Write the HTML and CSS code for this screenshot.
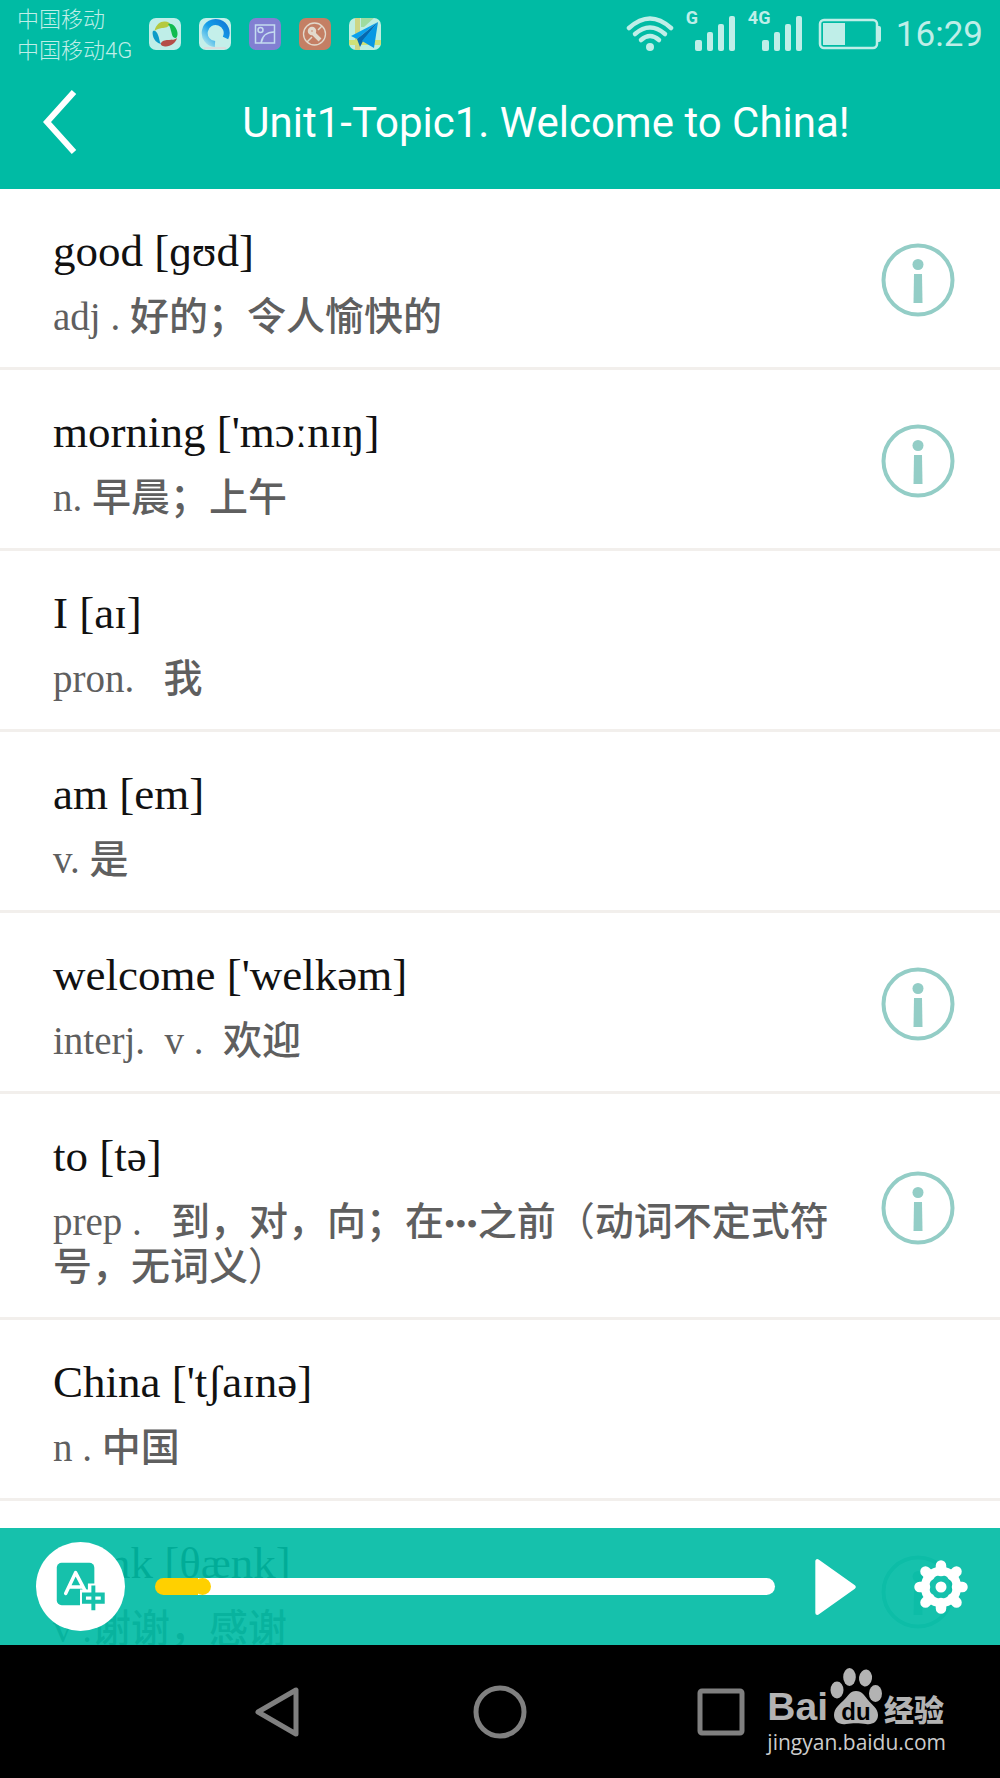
FILE: index.html
```html
<!DOCTYPE html>
<html lang="zh-CN">
<head>
<meta charset="utf-8">
<meta name="viewport" content="width=device-width, initial-scale=1">
<title>Unit1-Topic1. Welcome to China!</title>
<link rel="stylesheet" href="styles.css">
</head>
<body>
<svg class="defs" aria-hidden="true">
  <symbol id="info" viewBox="0 0 74 74">
    <circle cx="37" cy="37" r="34.5" fill="none" stroke="currentColor" stroke-width="4"/>
    <circle cx="37" cy="21.500" r="5.500" fill="currentColor"/>
    <path d="M33 31h8l.5 29h-9z" fill="currentColor"/>
  </symbol>
  <symbol id="signal" viewBox="0 0 42 36">
    <rect x="0" y="24" width="7" height="11" rx="2"/>
    <rect x="12" y="16" width="6" height="19" rx="2"/>
    <rect x="23" y="8" width="6" height="27" rx="2"/>
    <rect x="34" y="0" width="6" height="35" rx="2"/>
  </symbol>
</svg>

<div class="app">
  <header class="top">
    <div class="status">
      <div class="carriers"><span>中国移动</span><span>中国移动4G</span></div>
      <div class="notices">
        <svg viewBox="0 0 32 32"><rect width="32" height="32" rx="7" fill="#bfeee8"/>
          <path d="M5.500 13C7 6 12 3 16 3.500c3 0 5 1.500 5 2.500-1 3-5 4-8 4-3 .5-5 1-7.500 3z" fill="#b5c93f"/>
          <path d="M19 6c5-1.500 9 4 9.500 9 .3 3-1 5.500-2.500 5-3-1-3-4-4-7-.7-3-1-5-3-7z" fill="#10bb50"/>
          <path d="M28 20c-1 5-7 9-12 8.500-3-.3-5-2-4-3.500 2-3 5-3 8-3 3-.3 6 0 8-2z" fill="#b44e48"/>
          <path d="M4 13c2-1 4 1 5 4 1.500 3 1 6 3 9-4-1-7-4-8-8-.4-2-.7-4 0-5z" fill="#0b9cc8"/></svg>
        <svg viewBox="0 0 32 32"><defs><linearGradient id="ring" x1="1" y1="0" x2="0" y2="1"><stop offset="0" stop-color="#1279d8"/><stop offset=".5" stop-color="#149fe8"/><stop offset="1" stop-color="#a9e3ed"/></linearGradient></defs>
          <rect width="32" height="32" rx="7" fill="#c4efea"/>
          <path d="M26.500 20A11 11 0 1 0 16 26" fill="none" stroke="url(#ring)" stroke-width="6"/><path d="M5 30h22" stroke="#d9dede" stroke-width="2"/></svg>
        <svg viewBox="0 0 32 32"><rect width="32" height="32" rx="7" fill="#827fd2"/>
          <g fill="none" stroke="#c4dcf0" stroke-width="1.500"><rect x="6.500" y="7" width="19" height="18"/><circle cx="11.500" cy="12" r="2.500"/><path d="M12 25c1-7 6-11 13-11M12 25l2-5"/></g></svg>
        <svg viewBox="0 0 32 32"><rect width="32" height="32" rx="7" fill="#c47f64"/>
          <g fill="none" stroke="#e2d9cc"><circle cx="15.500" cy="16" r="11" stroke-width="1.300"/><path d="M23 8l-4 4M8 24l5-5" stroke-width="1.500"/><path d="M14 15l7 7" stroke-width="4"/><circle cx="13" cy="13" r="2.500" stroke-width="3.500"/></g></svg>
        <svg viewBox="0 0 32 32"><rect width="32" height="32" rx="7" fill="#bfeee1"/>
          <path d="M6 0h5v32H6z" fill="#cdd685"/><path d="M0 22h32v5H0z" fill="#cfe178"/><path d="M12 0h13l-10 9h-3z" fill="#9fdca0"/>
          <path d="M29 4L2 18l6 3z" fill="#0aa0ee"/><path d="M29 4L8 21l3 8 3-6z" fill="#0669b0"/><path d="M29 4L13 23l12 7z" fill="#0798e4"/></svg>
      </div>
      <div class="system">
        <svg class="wifi" viewBox="0 0 48 36"><g fill="none" stroke="currentColor" stroke-width="4.500" stroke-linecap="round"><path d="M3 12Q24-7 45 12"/><path d="M9 18Q24 5 39 18"/><path d="M15 24Q24 16 33 24"/></g><circle cx="24" cy="31" r="4" fill="currentColor"/></svg>
        <div class="cell"><b>G</b><svg><use href="#signal"/></svg></div>
        <div class="cell wide"><b>4G</b><svg><use href="#signal"/></svg></div>
        <svg class="battery" viewBox="0 0 64 32"><rect x="2" y="2" width="57" height="28" rx="4" fill="none" stroke="currentColor" stroke-width="2.500"/><rect x="5" y="5" width="22" height="22" fill="currentColor"/><path d="M59 8h2q2 0 2 2v12q0 2-2 2h-2z" fill="currentColor"/></svg>
        <time>16:29</time>
      </div>
    </div>
    <div class="bar">
      <button class="back" aria-label="返回"><svg viewBox="0 0 34 64"><path d="M31 2L4 32l27 30" fill="none" stroke="currentColor" stroke-width="6"/></svg></button>
      <h1>Unit1-Topic1. Welcome to China!</h1>
    </div>
  </header>

  <main class="content">
    <ul class="words">
      <li><div class="entry"><h2>good [ɡʊd]</h2><p>adj . 好的；令人愉快的</p></div><button class="info" aria-label="详情"><svg><use href="#info"/></svg></button></li>
      <li><div class="entry"><h2>morning ['mɔːnɪŋ]</h2><p>n. 早晨；上午</p></div><button class="info" aria-label="详情"><svg><use href="#info"/></svg></button></li>
      <li><div class="entry"><h2>I [aɪ]</h2><p>pron.   我</p></div></li>
      <li><div class="entry"><h2>am [em]</h2><p>v. 是</p></div></li>
      <li><div class="entry"><h2>welcome ['welkəm]</h2><p>interj.  v .  欢迎</p></div><button class="info" aria-label="详情"><svg><use href="#info"/></svg></button></li>
      <li><div class="entry"><h2>to [tə]</h2><p>prep .   到，对，向；在<span class="dots">•••</span>之前<span class="paren">（</span>动词不定式符号，无词义<span class="paren">）</span></p></div><button class="info" aria-label="详情"><svg><use href="#info"/></svg></button></li>
      <li><div class="entry"><h2>China ['tʃaɪnə]</h2><p>n . 中国</p></div></li>
      <li><div class="entry"><h2>thank [θænk]</h2><p>v .谢谢，感谢</p></div><button class="info" aria-label="详情"><svg><use href="#info"/></svg></button></li>
    </ul>

    <div class="player">
      <button class="translate" aria-label="中英切换"><svg viewBox="0 0 90 90">
        <rect x="21" y="21" width="38" height="43" rx="5" fill="#16c1ab"/>
        <path d="M30 52l10-21 11 21M34 45.500h12" fill="none" stroke="#fff" stroke-width="3.500" stroke-linecap="round" stroke-linejoin="round"/>
        <path d="M44.500 48h8v-6h8v7h11v17h-27z" fill="#fff"/>
        <path d="M48.500 53h19v7.500h-19zM58 44v25" fill="none" stroke="#16c1ab" stroke-width="4"/>
      </svg></button>
      <input class="progress" type="range" min="0" max="1000" value="65" aria-label="播放进度">
      <button class="play" aria-label="播放"><svg viewBox="0 0 40 56"><path d="M3 3v50l35-25z" fill="currentColor" stroke="currentColor" stroke-width="4" stroke-linejoin="round"/></svg></button>
      <button class="settings" aria-label="设置"><svg viewBox="-27 -27 54 54">
        <g stroke="currentColor" stroke-width="10.500" stroke-linecap="round"><path d="M0-21.500V-16M0 16v5.500M-21.500 0H-16M16 0h5.500M-15.500-15.500l4 4M11.500 11.500l4 4M-15.500 15.500l4-4M11.500-11.500l4-4"/></g>
        <circle r="16" fill="none" stroke="currentColor" stroke-width="8.500"/><circle r="5.500" fill="currentColor"/>
      </svg></button>
    </div>
  </main>

  <footer class="nav">
    <button aria-label="后退"><svg viewBox="0 0 54 54"><path d="M44 5v44L6 27z" fill="none" stroke="currentColor" stroke-width="5" stroke-linejoin="round"/></svg></button>
    <button aria-label="主页"><svg viewBox="0 0 54 54"><circle cx="27" cy="27" r="24" fill="none" stroke="currentColor" stroke-width="5"/></svg></button>
    <button aria-label="最近任务"><svg viewBox="0 0 54 54"><rect x="6" y="6" width="42" height="42" rx="2" fill="none" stroke="currentColor" stroke-width="5"/></svg></button>
    <a class="brand" href="#">
      <span class="logo"><span class="latin">Bai</span><span class="paw"><svg viewBox="0 0 52 58"><g fill="#b3b3b3"><ellipse cx="7" cy="22" rx="6.500" ry="8.500"/><ellipse cx="19.500" cy="9" rx="6.300" ry="9"/><ellipse cx="35.500" cy="10" rx="6.500" ry="8.500" transform="rotate(8 35.500 10)"/><ellipse cx="45.500" cy="25.500" rx="6.500" ry="8.500"/><path d="M26 23c6 0 9 5 12 9s10 8 10 15-6 10-12 9-14-1-20 0S4 54 4 47s6-11 10-15 6-9 12-9z"/></g></svg><i>du</i></span><span class="han">经验</span></span>
      <span class="site">jingyan.baidu.com</span>
    </a>
  </footer>
</div>
</body>
</html>
```

FILE: styles.css
```css
* { box-sizing: border-box; }
body, h1, h2, p, ul { margin: 0; padding: 0; }
body { background: #fff; font-family: Roboto, "Noto Sans CJK SC", sans-serif; }
button { display: block; padding: 0; border: 0; background: none; color: inherit; }
svg { display: block; }
.defs { position: absolute; width: 0; height: 0; }

.app { display: flex; flex-direction: column; height: 100vh; }

/* header */
.top { flex: none; background: #00bba4; color: #fff; }
.status { display: flex; align-items: center; height: 68px; padding: 0 17px; color: #bfeee8; }
.carriers { display: flex; flex-direction: column; padding-top: 2px; font-size: 22px; line-height: 31px; font-weight: 300; white-space: nowrap; }
.notices { display: flex; gap: 18px; margin-left: 17px; }
.notices svg { width: 32px; height: 32px; }
.system { display: flex; align-items: center; margin-left: auto; }
.wifi { width: 48px; height: 36px; }
.cell { display: flex; margin-left: 12px; }
.cell b { width: 9px; font-size: 18px; line-height: 18px; margin-top: -7px; white-space: nowrap; }
.cell.wide { margin-left: 11px; }
.cell.wide b { width: 14px; }
.cell svg { width: 42px; height: 36px; fill: currentColor; }
.battery { width: 64px; height: 32px; margin-left: 14px; }
time { margin-left: 14px; padding-top: 2px; font-size: 35px; line-height: 40px; }
.bar { display: flex; align-items: center; height: 121px; padding: 0 43px 14px; }
.back svg { width: 34px; height: 64px; }
h1 { flex: 1; padding: 2px 0 0 58px; font-size: 42px; line-height: 50px; font-weight: 400; text-align: center; white-space: nowrap; }

/* word list */
.content { position: relative; flex: 1; min-height: 0; }
.words { height: 100%; overflow-y: auto; scrollbar-width: none; list-style: none; font-family: "Liberation Serif", "Noto Sans CJK SC", serif; }
.words li { display: flex; align-items: center; justify-content: space-between; gap: 32px; padding: 32px 45px 28px 53px; border-bottom: 3px solid #f2efec; }
.entry { max-width: 790px; }
h2 { margin-bottom: 13px; font-size: 45px; line-height: 60px; font-weight: 400; color: #111; }
.entry p { font-size: 39px; line-height: 45px; font-weight: 500; color: #5f5f5f; white-space: pre-wrap; }
.paren { font-family: "Noto Sans CJK TC", sans-serif; font-weight: 400; line-height: 0; }
.dots { font-size: 32px; line-height: 0; }
.info { flex: none; color: #93cdc6; }
.info svg { width: 74px; height: 74px; }

/* player floats over the end of the list */
.player { position: absolute; left: 0; right: 0; bottom: 0; display: flex; align-items: center; height: 117px; padding: 0 32px 0 36px; background: rgba(0, 187, 164, .914); color: #fff; }
.translate { border-radius: 50%; background: #fff; }
.translate svg { width: 89px; height: 89px; }
.progress { flex: 1; min-width: 0; height: 17px; margin: 0 39px 0 30px; border-radius: 9px; appearance: none; background: linear-gradient(to right, #ffd000 7%, #fff 7%); }
.progress::-webkit-slider-thumb { appearance: none; width: 17px; height: 17px; border-radius: 50%; background: #ffd000; }
.play svg { width: 42px; height: 58px; }
.settings { margin-left: 58px; }
.settings svg { width: 54px; height: 54px; }

/* system navigation */
.nav { flex: none; display: flex; align-items: center; height: 133px; padding: 0 54px 0 252px; background: #000; color: #808080; }
.nav svg { width: 54px; height: 54px; }
.nav button + button { margin-left: 167px; }
.nav .brand { display: flex; flex-direction: column; margin-left: auto; color: #b3b3b3; text-decoration: none; }
.logo { display: flex; align-items: flex-end; gap: 2px; height: 58px; }
.latin { font: 700 39px/38px "Liberation Sans", sans-serif; }
.paw { display: grid; }
.nav .paw svg { grid-area: 1 / 1; width: 52px; height: 58px; }
.paw i { grid-area: 1 / 1; align-self: end; justify-self: center; font: 700 24px/28px "Liberation Sans", sans-serif; color: #000; }
.han { font: 900 30px/36px "Noto Sans CJK SC", sans-serif; }
.site { padding-top: 2px; font: 400 21px/28px "Open Sans", sans-serif; color: #ccc; }
```
